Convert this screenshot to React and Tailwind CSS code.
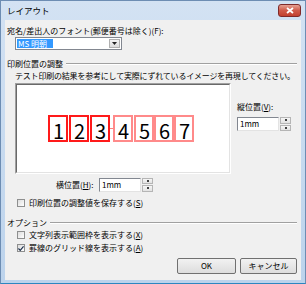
import React from 'react';

const jp = "font-['Noto_Sans_CJK_JP',sans-serif]";

function Check({ checked }) {
  return (
    <span className="w-[8px] h-[8px] border border-[#8e8f8f] bg-gradient-to-br from-[#dcdcdc] to-white flex items-center justify-center shrink-0">
      {checked && (
        <svg width="7" height="7" viewBox="0 0 7 7">
          <path d="M0.5 3.5 L2.6 5.6 L6.5 1" stroke="#1c2f4c" strokeWidth="1.4" fill="none" />
        </svg>
      )}
    </span>
  );
}

function Etched({ className = '' }) {
  return <div className={`flex-1 h-[2px] border-t border-[#a0a0a0] border-b border-b-white ${className}`} />;
}

function Spin({ value }) {
  return (
    <div className="flex h-[14px]">
      <div className="w-[42px] h-full bg-white border border-[#828790] border-r-[#e3e3e3] border-b-[#e3e3e3] text-[8px] leading-[12px] pl-[2px] text-black">{value}</div>
      <div className="w-[11px] flex flex-col ml-[1px] gap-[1px]">
        <div className="flex-1 border border-[#b5b5b5] bg-gradient-to-b from-[#f6f6f6] to-[#e2e2e2] flex items-center justify-center">
          <span className="w-[2px] h-[2px] bg-[#404040]" />
        </div>
        <div className="flex-1 border border-[#b5b5b5] bg-gradient-to-b from-[#f6f6f6] to-[#e2e2e2] flex items-center justify-center">
          <span className="w-[2px] h-[2px] bg-[#404040]" />
        </div>
      </div>
    </div>
  );
}

const digits = [
  { n: '1', strong: true, ml: 'ml-0' },
  { n: '2', strong: true, ml: 'ml-[1px]' },
  { n: '3', strong: true, ml: 'ml-[1px]' },
  { n: '4', strong: false, ml: 'ml-[3px]' },
  { n: '5', strong: false, ml: 'ml-[1px]' },
  { n: '6', strong: false, ml: 'ml-0' },
  { n: '7', strong: false, ml: 'ml-0' },
];

function Button({ children, width }) {
  return (
    <div className={`${width} h-[16px] border border-[#707070] rounded-[2px] bg-gradient-to-b from-[#f2f2f2] to-[#dddddd] flex items-center justify-center text-[8px] text-black`}>
      {children}
    </div>
  );
}

export default function App() {
  return (
    <div className={`w-[306px] h-[284px] flex flex-col bg-gradient-to-b from-[#d3e2f3] to-[#bcd3ec] border border-[#6d8db3] border-b-[#2c86c0] ${jp}`}>
      {/* title bar */}
      <div className="h-[19px] flex items-center pl-[6px] pr-[4px]">
        <span className="text-[8.5px] text-black leading-none">レイアウト</span>
        <div className="ml-auto w-[23px] h-[13px] rounded-[3px] border border-[#7f2a2a] bg-gradient-to-b from-[#e4a093] via-[#cf5a4a] to-[#c2402f] flex items-center justify-center">
          <svg width="8" height="7" viewBox="0 0 8 7">
            <path d="M1 1 L7 6 M7 1 L1 6" stroke="white" strokeWidth="1.8" />
          </svg>
        </div>
      </div>

      {/* client */}
      <div className="mx-[4px] h-[260px] bg-[#f0f0f0] flex flex-col text-[8px] text-black pl-[2px] pr-[4px]">
        <div className="mt-[6px] h-[10px] leading-[10px]">宛名/差出人のフォント(郵便番号は除く)(F):</div>

        <div className="mt-[1px] ml-[8px] w-[107px] h-[13px] bg-white border border-[#828790] flex items-center">
          <span className="ml-[1px] h-[9px] bg-[#3399ff] text-white leading-[9px] px-[1px] pr-[6px]">MS 明朝</span>
          <div className="ml-auto mr-[1px] w-[11px] h-[9px] bg-gradient-to-b from-[#f4f4f4] to-[#dcdcdc] border border-[#b0b0b0] flex items-center justify-center">
            <svg width="5" height="3" viewBox="0 0 5 3"><path d="M0 0 H5 L2.5 3 Z" fill="#222" /></svg>
          </div>
        </div>

        <div className="mt-[9px] h-[10px] flex items-center gap-[3px]">
          <span className="leading-[10px]">印刷位置の調整</span>
          <Etched />
        </div>

        <div className="mt-[2px] ml-[8px] h-[10px] leading-[10px] whitespace-nowrap tracking-[-0.2px]">テスト印刷の結果を参考にして実際にずれているイメージを再現してください。</div>

        <div className="mt-[2px] h-[91px] flex">
          <div className="ml-[8px] w-[216px] h-full border border-[#a0a0a0] border-r-white border-b-white">
            <div className="w-full h-full bg-white border border-[#696969] border-r-[#e3e3e3] border-b-[#e3e3e3] pl-[31px] pt-[30px]">
              <div className="flex items-start">
                {digits.map((d, i) => (
                  <div key={d.n} className={`flex items-center ${d.ml}`}>
                    {i === 3 && <span className="w-[3px] h-[1px] bg-[#ff8080] -ml-[3px]" />}
                    <div className={`w-[20px] h-[27px] border-2 ${d.strong ? 'border-[#ff1a1a]' : 'border-[#ff8a8a]'} flex items-end justify-end pr-[2px]`}>
                      <span className="text-[20px] leading-[20px] translate-y-[1px] text-black">{d.n}</span>
                    </div>
                  </div>
                ))}
              </div>
            </div>
          </div>
          <div className="ml-[6px] pt-[19px] flex flex-col">
            <div className="h-[10px] leading-[10px]">縦位置(<span className="underline">V</span>):</div>
            <div className="mt-[5px]"><Spin value="1mm" /></div>
          </div>
        </div>

        <div className="mt-[4px] h-[13px] flex items-center">
          <span className="ml-[49px] w-[43px] leading-[10px]">横位置(<span className="underline">H</span>):</span>
          <Spin value="1mm" />
        </div>

        <div className="mt-[7px] h-[10px] flex items-center ml-[10px] gap-[4px]">
          <Check />
          <span className="leading-[10px]">印刷位置の調整値を保存する(<span className="underline">S</span>)</span>
        </div>

        <div className="mt-[10px] h-[10px] flex items-center gap-[3px]">
          <span className="leading-[10px]">オプション</span>
          <Etched />
        </div>

        <div className="mt-[2px] h-[10px] flex items-center ml-[10px] gap-[4px]">
          <Check />
          <span className="leading-[10px]">文字列表示範囲枠を表示する(<span className="underline">X</span>)</span>
        </div>

        <div className="mt-[3px] h-[10px] flex items-center ml-[10px] gap-[4px]">
          <Check checked />
          <span className="leading-[10px]">罫線のグリッド線を表示する(<span className="underline">A</span>)</span>
        </div>

        <div className="mt-[5px] flex justify-end gap-[4px]">
          <Button width="w-[59px]">OK</Button>
          <Button width="w-[57px]">キャンセル</Button>
        </div>
      </div>
    </div>
  );
}
